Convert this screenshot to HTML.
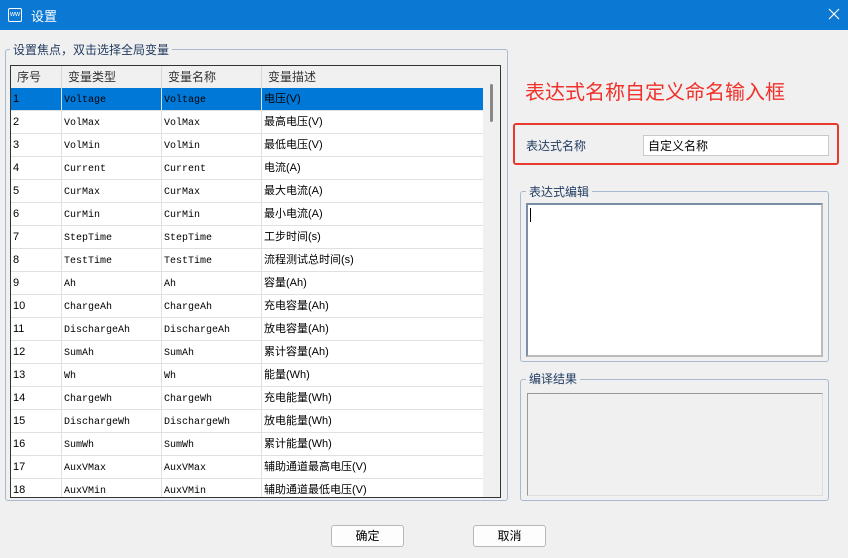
<!DOCTYPE html>
<html><head><meta charset="utf-8"><style>
*{box-sizing:border-box;margin:0;padding:0}
body{width:848px;height:558px;background:#f0f0f0;font-family:"Liberation Sans","Noto Sans CJK SC",sans-serif;font-size:12px;color:#000;position:relative;overflow:hidden}
.abs{position:absolute}
.title{left:0;top:0;width:848px;height:30px;background:#0b78d4;color:#fff;font-size:13px}
.grp{border:1px solid #a9b9cf;border-radius:3px}
.legend{background:#f0f0f0;padding:0 3px;color:#1f3a5f;font-size:12px}
.r{display:flex;height:23px;width:473px}
.r div{height:23px;line-height:22px;border-right:1px solid #e0e0e0;border-bottom:1px solid #e0e0e0;padding-left:2px;white-space:nowrap;overflow:hidden;font-size:11px}
.r div:nth-child(1){width:51px}
.r div:nth-child(2),.r div:nth-child(3){width:100px;font-family:"Liberation Mono",monospace;font-size:10px;padding-top:5px;line-height:16px}
.r div:nth-child(4){width:222px}
.r.sel div{background:#0078d7}
.h{display:flex;height:22px;background:#f0f0f0}
.h div{line-height:22px;padding-left:6px;border-right:1px solid #d8d8d8;color:#333;font-size:12px}
.btn{background:#fdfdfd;border:1px solid #b8b8b8;border-radius:3px;text-align:center;line-height:20px}
</style></head><body>
<div class="abs title"><div class="abs" style="left:8px;top:8px;width:14px;height:14px;border:1.5px solid #fff;border-radius:2px;font-size:7px;line-height:11px;text-align:center">ww</div><span class="abs" style="left:31px;top:6px">设置</span>
<svg class="abs" style="left:828px;top:8px" width="12" height="12"><path d="M1 1L11 11M11 1L1 11" stroke="#fff" stroke-width="1.2"/></svg></div>

<div class="abs grp" style="left:5px;top:49px;width:503px;height:452px"></div>
<div class="abs legend" style="left:10px;top:41px">设置焦点，双击选择全局变量</div>
<div class="abs" style="left:10px;top:65px;width:491px;height:433px;border:1px solid #333;background:#fff;overflow:hidden">
<div class="h"><div style="width:51px">序号</div><div style="width:100px">变量类型</div><div style="width:100px">变量名称</div><div style="width:222px">变量描述</div></div>
<div class="r sel"><div>1</div><div>Voltage</div><div>Voltage</div><div>电压(V)</div></div>
<div class="r"><div>2</div><div>VolMax</div><div>VolMax</div><div>最高电压(V)</div></div>
<div class="r"><div>3</div><div>VolMin</div><div>VolMin</div><div>最低电压(V)</div></div>
<div class="r"><div>4</div><div>Current</div><div>Current</div><div>电流(A)</div></div>
<div class="r"><div>5</div><div>CurMax</div><div>CurMax</div><div>最大电流(A)</div></div>
<div class="r"><div>6</div><div>CurMin</div><div>CurMin</div><div>最小电流(A)</div></div>
<div class="r"><div>7</div><div>StepTime</div><div>StepTime</div><div>工步时间(s)</div></div>
<div class="r"><div>8</div><div>TestTime</div><div>TestTime</div><div>流程测试总时间(s)</div></div>
<div class="r"><div>9</div><div>Ah</div><div>Ah</div><div>容量(Ah)</div></div>
<div class="r"><div>10</div><div>ChargeAh</div><div>ChargeAh</div><div>充电容量(Ah)</div></div>
<div class="r"><div>11</div><div>DischargeAh</div><div>DischargeAh</div><div>放电容量(Ah)</div></div>
<div class="r"><div>12</div><div>SumAh</div><div>SumAh</div><div>累计容量(Ah)</div></div>
<div class="r"><div>13</div><div>Wh</div><div>Wh</div><div>能量(Wh)</div></div>
<div class="r"><div>14</div><div>ChargeWh</div><div>ChargeWh</div><div>充电能量(Wh)</div></div>
<div class="r"><div>15</div><div>DischargeWh</div><div>DischargeWh</div><div>放电能量(Wh)</div></div>
<div class="r"><div>16</div><div>SumWh</div><div>SumWh</div><div>累计能量(Wh)</div></div>
<div class="r"><div>17</div><div>AuxVMax</div><div>AuxVMax</div><div>辅助通道最高电压(V)</div></div>
<div class="r"><div>18</div><div>AuxVMin</div><div>AuxVMin</div><div>辅助通道最低电压(V)</div></div>
<div class="abs" style="left:472px;top:0;width:17px;height:431px;background:#f0f0f0"><div class="abs" style="left:7px;top:18px;width:3px;height:38px;background:#888;border-radius:2px"></div></div>
</div>

<div class="abs" style="left:525px;top:76px;color:#f0302a;font-size:20px">表达式名称自定义命名输入框</div>
<div class="abs" style="left:513px;top:123px;width:326px;height:42px;border:2px solid #e8392e;border-radius:3px"></div>
<div class="abs" style="left:526px;top:137px;color:#1f3a5f">表达式名称</div>
<div class="abs" style="left:643px;top:135px;width:186px;height:21px;background:#fff;border:1px solid #c8c8c8;padding:1px 4px">自定义名称</div>

<div class="abs grp" style="left:520px;top:191px;width:309px;height:171px"></div>
<div class="abs legend" style="left:526px;top:183px">表达式编辑</div>
<div class="abs" style="left:526px;top:203px;width:297px;height:154px;background:#fff;border:2px solid #7a8ea8;border-right-color:#bbb;border-bottom-color:#bbb"><div class="abs" style="left:2px;top:3px;width:1px;height:14px;background:#000"></div></div>

<div class="abs grp" style="left:520px;top:379px;width:309px;height:122px"></div>
<div class="abs legend" style="left:526px;top:370px">编译结果</div>
<div class="abs" style="left:527px;top:393px;width:296px;height:103px;background:#f0f0f0;border:1px solid #999;border-right-color:#ddd;border-bottom-color:#ddd"></div>

<div class="abs btn" style="left:331px;top:525px;width:73px;height:22px">确定</div>
<div class="abs btn" style="left:473px;top:525px;width:73px;height:22px">取消</div>
</body></html>
